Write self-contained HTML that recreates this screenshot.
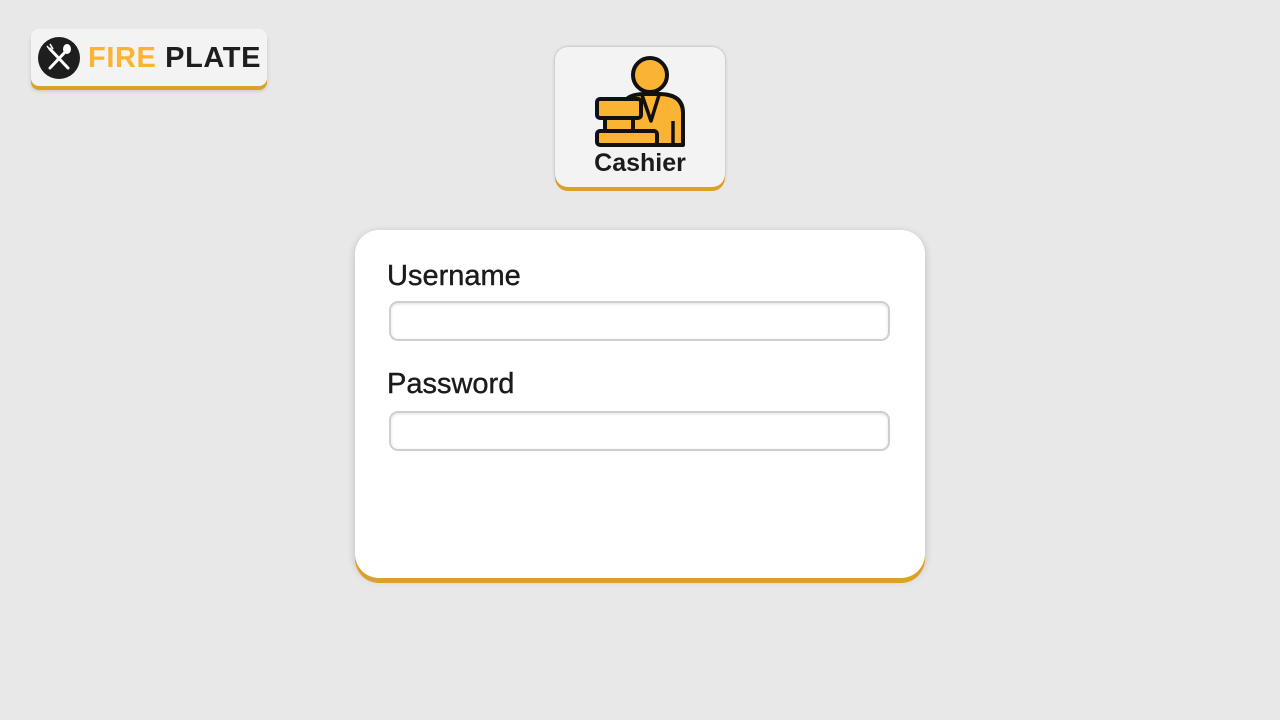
<!DOCTYPE html>
<html><head><style>
body{margin:0;width:1280px;height:720px;background:#e8e8e8;font-family:"Liberation Sans",sans-serif;position:relative;overflow:hidden}
.logo{position:absolute;left:31px;top:29px;width:236px;height:57px;background:#f3f3f3;border-radius:8px;box-shadow:0 4px 0 #dca12a,0 5px 4px rgba(0,0,0,.15)}
.logo .c{position:absolute;left:7px;top:8px;width:42px;height:42px;border-radius:50%;background:#1e1e1e}
.logo .t{position:absolute;left:57px;top:13px;font-size:29px;letter-spacing:.6px;font-weight:bold;color:#1e1e1e;white-space:nowrap}
.logo .t span{color:#fbb333}
.cash{position:absolute;left:555px;top:47px;width:170px;height:140px;background:#f3f3f3;border-radius:13px;box-shadow:0 4px 0 #dca12a,0 0 3px rgba(0,0,0,.25)}
.cash .l{position:absolute;left:0;right:0;top:102px;text-align:center;font-size:25px;font-weight:bold;color:#1b1b1b}
.form{position:absolute;left:355px;top:230px;width:570px;height:348px;background:#fff;border-radius:24px;box-shadow:0 5px 0 #dca12a,0 2px 8px rgba(0,0,0,.2)}
.lab{position:absolute;left:32px;font-size:29px;color:#1b1b1b;-webkit-text-stroke:.4px #1b1b1b}
.in{position:absolute;left:34px;width:497px;height:36px;border:2px solid #cfcfcf;border-radius:9px;box-shadow:inset 0 1px 3px rgba(0,0,0,.12)}
</style></head><body>
<div class="logo"><div class="c"><svg width="42" height="42" viewBox="0 0 42 42"><g stroke="#fff" stroke-width="3" stroke-linecap="round"><line x1="12" y1="12" x2="30" y2="31"/><line x1="30" y1="12" x2="12" y2="31"/></g><ellipse cx="29" cy="12" rx="4" ry="5" fill="#fff"/><g stroke="#fff" stroke-width="1.5"><line x1="9" y1="9" x2="13" y2="14"/><line x1="12" y1="7" x2="15" y2="12"/></g></svg></div><div class="t"><span>FIRE</span> PLATE</div></div>
<div class="cash"><svg style="position:absolute;left:0;top:0" width="170" height="105" viewBox="0 0 170 105"><g stroke="#111" stroke-width="4" stroke-linejoin="round" fill="#fbb333"><path d="M68 98V62Q68 47 90 47H104Q128 47 128 66V98Z"/><circle cx="95" cy="28" r="17"/><rect x="50" y="71" width="28" height="13"/><rect x="42" y="52" width="44" height="19" rx="3"/><rect x="42" y="84" width="60" height="14" rx="3"/></g><path d="M87 48L96 74L104 48" stroke="#111" stroke-width="3.5" fill="none" stroke-linejoin="round"/><line x1="118" y1="74" x2="118" y2="98" stroke="#111" stroke-width="3.5"/></svg><div class="l">Cashier</div></div>
<div class="form">
<div class="lab" style="top:30px">Username</div><div class="in" style="top:71px"></div>
<div class="lab" style="top:138px">Password</div><div class="in" style="top:181px"></div>
</div>
</body></html>
